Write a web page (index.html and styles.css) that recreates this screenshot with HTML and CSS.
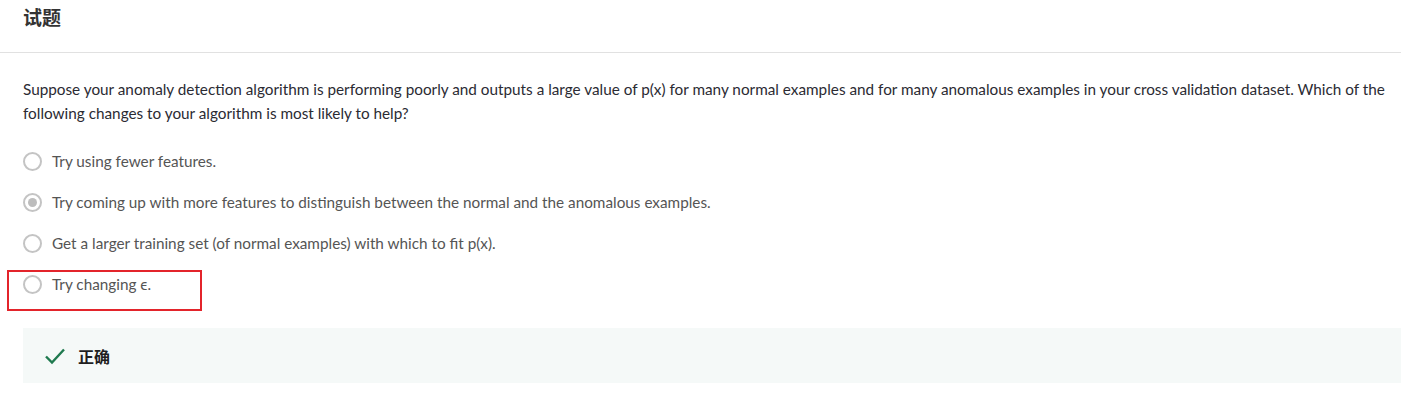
FILE: index.html
```html
<!DOCTYPE html>
<html>
<head>
<meta charset="utf-8">
<link rel="stylesheet" href="styles.css">
</head>
<body>
<div class="header"><h2 class="title">试题</h2></div>
<div class="content">
  <p class="question">Suppose your anomaly detection algorithm is performing poorly and outputs a large value of p(x) for many normal examples and for many anomalous examples in your cross validation dataset. Which of the following changes to your algorithm is most likely to help?</p>
  <div class="options">
    <div class="option"><span class="radio"></span><span class="label">Try using fewer features.</span></div>
    <div class="option"><span class="radio checked"></span><span class="label">Try coming up with more features to distinguish between the normal and the anomalous examples.</span></div>
    <div class="option"><span class="radio"></span><span class="label">Get a larger training set (of normal examples) with which to fit p(x).</span></div>
    <div class="option marked"><span class="radio"></span><span class="label">Try changing ϵ.</span><span class="redbox"></span></div>
  </div>
  <div class="feedback">
    <svg class="check" width="22" height="18" viewBox="0 0 22 18"><path d="M2 9.5 L8 15.5 L20 2.5" fill="none" stroke="#1f7a4f" stroke-width="2.4"/></svg>
    <span class="fb-text">正确</span>
  </div>
</div>
</body>
</html>
```
FILE: styles.css
```css
* { box-sizing: border-box; }
body {
  margin: 0;
  background: #fff;
  font-family: Lato, "Noto Sans CJK SC", sans-serif;
  color: #333;
}
.header {
  height: 53px;
  border-bottom: 1px solid #e1e1e1;
  padding: 3px 0 0 23px;
}
.title {
  margin: 0;
  font-size: 19px;
  font-weight: 700;
  line-height: 28px;
  color: #333;
  font-family: "Noto Sans CJK SC", sans-serif;
}
.content {
  padding: 24px 0 0 23px;
}
.question {
  margin: 0;
  font-size: 15.3px;
  line-height: 24px;
  color: #2b2b33;
  padding-right: 10px;
}
.options {
  margin-top: 25px;
  display: flex;
  flex-direction: column;
  gap: 19px;
}
.option {
  position: relative;
  display: flex;
  align-items: center;
  height: 22px;
  font-size: 15.3px;
  color: #555;
}
.radio {
  width: 19px;
  height: 19px;
  border: 2px solid #c4c4c4;
  border-radius: 50%;
  margin-right: 10px;
  flex: none;
  display: flex;
  align-items: center;
  justify-content: center;
}
.radio.checked::after {
  content: "";
  width: 9px;
  height: 9px;
  border-radius: 50%;
  background: #bdbdbd;
}
.redbox {
  position: absolute;
  left: -16px;
  top: -3px;
  width: 195px;
  height: 41px;
  border: 2px solid #e3242b;
}
.feedback {
  margin-top: 33px;
  height: 55px;
  background: #f5f9f8;
  display: flex;
  align-items: center;
  padding-left: 21px;
}
.check { margin-right: 12px; }
.fb-text {
  font-family: "Noto Sans CJK SC", sans-serif;
  font-weight: 700;
  font-size: 16px;
  color: #1f1f1f;
}
```
